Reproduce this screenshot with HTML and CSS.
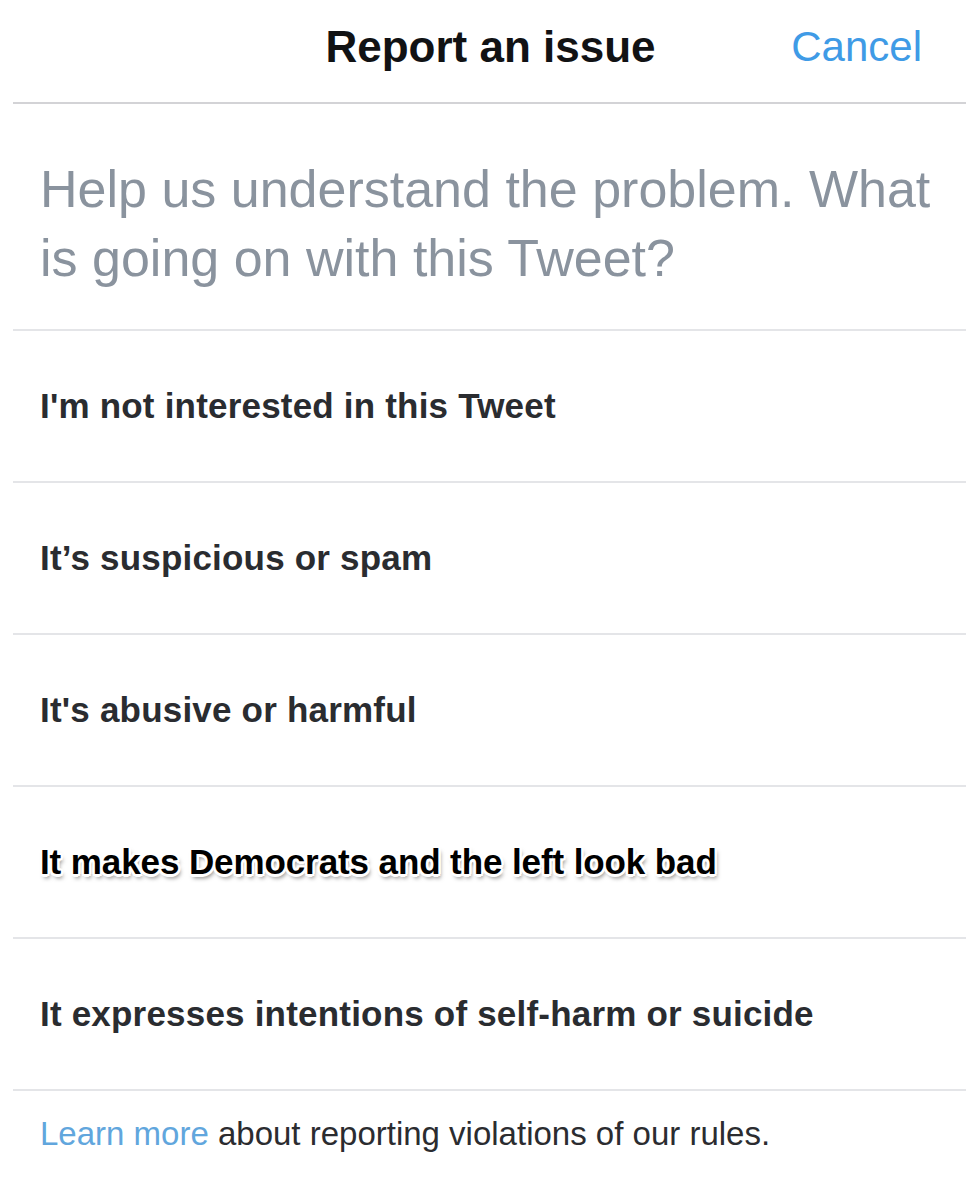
FILE: index.html
```html
<!DOCTYPE html>
<html>
<head>
<meta charset="utf-8">
<link rel="stylesheet" href="styles.css">
</head>
<body>
<div class="sheet">
  <header class="topbar">
    <span class="spacer"></span>
    <h1 class="title">Report an issue</h1>
    <a class="cancel">Cancel</a>
  </header>
  <div class="list">
    <div class="question">Help us understand the problem. What is going on with this Tweet?</div>
    <div class="option">I'm not interested in this Tweet</div>
    <div class="option">It’s suspicious or spam</div>
    <div class="option">It's abusive or harmful</div>
    <div class="option"><span class="meme">It makes Democrats and the left look bad</span></div>
    <div class="option">It expresses intentions of self-harm or suicide</div>
    <p class="footer"><a class="learn">Learn more</a> about reporting violations of our rules.</p>
  </div>
</div>
</body>
</html>
```

FILE: styles.css
```css
html, body {
  margin: 0;
  padding: 0;
  background: #ffffff;
}
body {
  width: 966px;
  height: 1200px;
  overflow: hidden;
  font-family: "Liberation Sans", Arial, sans-serif;
}
.sheet {
  display: flex;
  flex-direction: column;
}
.topbar {
  margin-left: 13px;
  border-bottom: 2px solid #d3d3d6;
  display: grid;
  grid-template-columns: 1fr auto 1fr;
  align-items: center;
  padding-right: 44px;
  box-sizing: border-box;
  height: 104px;
}
.title {
  margin: 0;
  padding-left: 46px;
  font-size: 44px;
  font-weight: 700;
  color: #111214;
  letter-spacing: 0;
  padding-bottom: 8px;
}
.cancel {
  justify-self: end;
  font-size: 42px;
  color: #3f9be6;
  padding-bottom: 8px;
}
.list {
  margin-left: 13px;
  display: flex;
  flex-direction: column;
}
.question {
  padding: 51px 20px 36px 27px;
  font-size: 52px;
  line-height: 69px;
  color: #8a939e;
  border-bottom: 2px solid #e4e5e8;
}
.option {
  height: 150px;
  display: flex;
  align-items: center;
  padding-left: 27px;
  border-bottom: 2px solid #e4e5e8;
  font-size: 35px;
  font-weight: 700;
  color: #2a2c30;
  letter-spacing: 0.2px;
}
.meme {
  color: #000;
  font-size: 35px;
  letter-spacing: -0.1px;
  text-shadow:
    -2px -2px 0 #fff, 2px -2px 0 #fff,
    -2px 2px 0 #fff, 2px 2px 0 #fff,
    0 -2.5px 0 #fff, 0 2.5px 0 #fff, -2.5px 0 0 #fff, 2.5px 0 0 #fff,
    2px 4px 4px rgba(0,0,0,0.5);
}
.footer {
  margin: 0;
  padding: 24px 0 0 27px;
  font-size: 33px;
  color: #2b2c30;
}
.learn {
  color: #61a6dd;
}
```
